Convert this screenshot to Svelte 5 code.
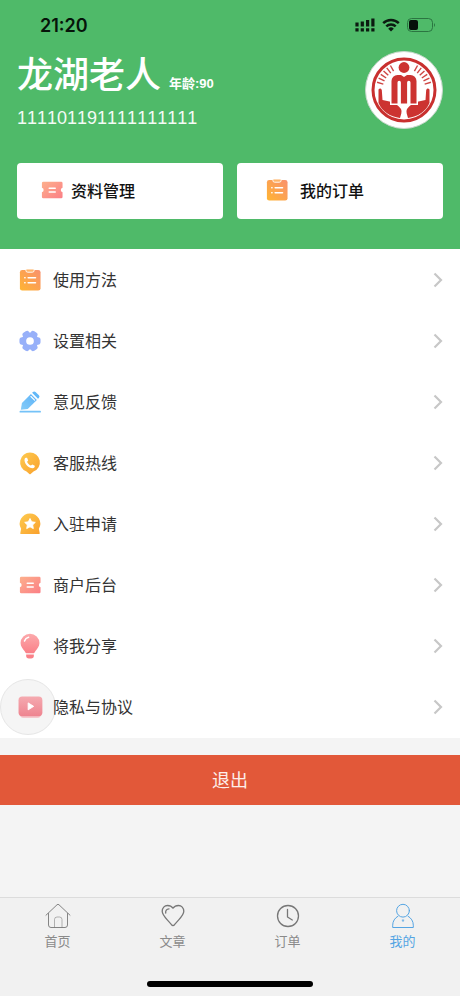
<script lang="ts">
  interface Item {
    icon: string;
    label: string;
  }

  const shortcuts: Item[] = [
    { icon: 'ticket', label: '资料管理' },
    { icon: 'clipboard', label: '我的订单' },
  ];

  const menu: Item[] = [
    { icon: 'clipboard', label: '使用方法' },
    { icon: 'gear', label: '设置相关' },
    { icon: 'pen', label: '意见反馈' },
    { icon: 'phone', label: '客服热线' },
    { icon: 'star', label: '入驻申请' },
    { icon: 'ticket', label: '商户后台' },
    { icon: 'bulb', label: '将我分享' },
    { icon: 'play', label: '隐私与协议' },
  ];

  const tabs: Item[] = [
    { icon: 'home', label: '首页' },
    { icon: 'heart', label: '文章' },
    { icon: 'clock', label: '订单' },
    { icon: 'user', label: '我的' },
  ];

  let activeTab = $state('我的');

  // rays on either side of the emblem's head
  const rays = [-74, -65, -56, -47, -38, -29, 29, 38, 47, 56, 65, 74];
</script>

{#snippet colorIcon(name: string)}
  <svg class="icon" viewBox="0 0 24 24" aria-hidden="true">
    {#if name === 'ticket'}
      <path fill="url(#g-coral)" d="M2.500 3h19.500a1.500 1.500 0 0 1 1.500 1.500v5a2.600 2.600 0 0 0 0 5v5a1.500 1.500 0 0 1-1.500 1.500H2.500A1.500 1.500 0 0 1 1 19.500v-5a2.600 2.600 0 0 0 0-5v-5A1.500 1.500 0 0 1 2.500 3z" />
      <path stroke="#fff" stroke-width="1.700" stroke-linecap="round" d="M9 10h6.500M9 14.200h6.500" />
    {:else if name === 'clipboard'}
      <rect x="1" y="1" width="22.500" height="22.500" rx="2.500" fill="url(#g-orange)" />
      <path fill="#ffb468" stroke="#fff" stroke-width="1" d="M7.500 0h9v1.500a2 2 0 0 1-2 2h-5a2 2 0 0 1-2-2z" />
      <path stroke="#fff" stroke-width="1.700" stroke-linecap="round" d="M6.300 9.500h.3M10 9.500h8M6.300 15h.3M10 15h8" />
    {:else if name === 'gear'}
      <circle cx="12" cy="12" r="9.300" fill="#97b0f9" />
      {#each [0, 60, 120] as angle}
        <rect x="0.500" y="8" width="23" height="8" rx="2.800" fill="#97b0f9" transform="rotate({angle} 12 12)" />
      {/each}
      <circle cx="12" cy="12" r="4.200" fill="#fff" />
    {:else if name === 'pen'}
      <path fill="url(#g-sky)" d="M2 20.500l1.200-7.500L13 3.300l6.500 6.400L9.500 19.500z" />
      <path fill="#62b8f8" d="M14.300 2l.9-.9a2 2 0 0 1 2.800 0l3.700 3.600a2 2 0 0 1 0 2.800l-1 1z" />
      <path stroke="#fff" stroke-width="1.200" stroke-linecap="round" d="M13 6l4 4" />
      <path stroke="#74c2f8" stroke-width="1.900" stroke-linecap="round" d="M1.500 22.500h21.500" />
    {:else if name === 'phone'}
      <path fill="url(#g-amber)" d="M12 .5a10.800 10.800 0 0 1 3.800 20.900L12.700 24a1.100 1.100 0 0 1-1.400 0l-3.100-2.600A10.800 10.800 0 0 1 12 .500z" />
      <path fill="#fff" d="M7.500 6.300l1.300.1 1.200 2.800-1.200 1.300c.8 1.900 2.200 3.400 4.200 4.300l1.500-1.100 2.700 1.200c.2 1.700-.8 2.700-2.400 2.700C10.500 17.500 6.300 13.300 6 9c0-1.500.5-2.400 1.500-2.700z" />
    {:else if name === 'star'}
      <path fill="url(#g-amber)" d="M12 .5a11.200 11.200 0 0 1 9.700 16.800l.8 4.200a1 1 0 0 1-1 1.500h-19a1 1 0 0 1-1-1.500l.8-4.200A11.200 11.200 0 0 1 12 .500z" />
      <path fill="#fff" stroke="#fff" stroke-width="1" stroke-linejoin="round" d="M12 6l1.800 3.600 4 .6-2.900 2.800.7 4L12 15.100 8.400 17l.7-4-2.900-2.800 4-.6z" />
    {:else if name === 'bulb'}
      <path fill="url(#g-pink)" d="M12 -1.500a10.300 10.300 0 0 1 10.300 10.300c0 4-2.600 6.200-4.500 9-.7 1.100-.9 2-1.800 2H8c-.9 0-1.100-.9-1.800-2C4.300 15 1.700 12.800 1.700 8.800A10.300 10.300 0 0 1 12-1.500z" />
      <path fill="#fa8088" d="M7.800 21.200h8.400v1.300a3 3 0 0 1-3 3h-2.400a3 3 0 0 1-3-3z" />
      <path fill="none" stroke="#fff" stroke-width="1.700" stroke-linecap="round" d="M6 6.500C6.700 4.500 8.300 3 10.500 2.500" />
    {:else if name === 'play'}
      <rect x="1" y="4" width="23" height="20" rx="4" fill="#f6c7cc" />
      <rect x="-0.500" y="0.500" width="26" height="21.500" rx="4" fill="url(#g-rose)" />
      <path fill="#fff" stroke="#fff" stroke-width="1" stroke-linejoin="round" d="M10 7.500l6 3.800-6 3.800z" />
    {/if}
  </svg>
{/snippet}

{#snippet tabIcon(name: string)}
  <svg class="tab-icon" viewBox="0 0 26 26" aria-hidden="true">
    {#if name === 'home'}
      <g stroke-width="0.900">
        <path d="M1 12.200L12 1.800q1-1 2 0l11 10.400M3.500 10.500V22a2.500 2.500 0 0 0 2.500 2.500h14a2.500 2.500 0 0 0 2.500-2.500V10.500" />
        <path d="M9.500 24.500v-8a2.500 2.500 0 0 1 2.500-2.500h2.500a2.500 2.500 0 0 1 2.500 2.500v8" opacity="0.600" />
      </g>
    {:else if name === 'heart'}
      <path d="M13 5.200C11.600 3.300 9.600 2.500 7.500 2.500 4.500 2.500 2.200 5 2.200 8.300c0 4.400 4.800 7.700 9.300 13.400q1.500 1.600 3 0c4.500-5.700 9.300-9 9.300-13.400 0-3.300-2.300-5.800-5.300-5.800-2.100 0-4.100.8-5.500 2.700z" />
      <path d="M5.700 10C5.400 7.700 6.500 6 9 5.800" />
    {:else if name === 'clock'}
      <circle cx="13" cy="13" r="10.500" />
      <path d="M12.500 6.500v7.500l4.800 3" />
    {:else if name === 'user'}
      <circle cx="13" cy="7.700" r="6.400" stroke-width="1" />
      <path stroke-width="1" d="M8 13.200c-3.200 1.800-5.300 5-5.300 9v2.300h20.600v-2.300c0-4-2.100-7.200-5.300-9" />
      <path d="M12.200 17.200h1.600M13 17v1.600" stroke-width="0.800" />
    {/if}
  </svg>
{/snippet}

<svg class="defs" aria-hidden="true">
  <defs>
    <linearGradient id="g-coral" x1="0" y1="0" x2="1" y2="1">
      <stop offset="0" stop-color="#fdb08c" />
      <stop offset="1" stop-color="#fb7f86" />
    </linearGradient>
    <linearGradient id="g-orange" x1="0" y1="1" x2="1" y2="0">
      <stop offset="0" stop-color="#ffb532" />
      <stop offset="1" stop-color="#f9906f" />
    </linearGradient>
    <linearGradient id="g-sky" x1="0" y1="1" x2="1" y2="0">
      <stop offset="0" stop-color="#86ccf8" />
      <stop offset="1" stop-color="#5bb2f8" />
    </linearGradient>
    <linearGradient id="g-amber" x1="0" y1="0" x2="1" y2="1">
      <stop offset="0" stop-color="#fdcb50" />
      <stop offset="1" stop-color="#faa02c" />
    </linearGradient>
    <linearGradient id="g-pink" x1="0" y1="0" x2="0" y2="1">
      <stop offset="0" stop-color="#fcaaac" />
      <stop offset="1" stop-color="#fa8088" />
    </linearGradient>
    <linearGradient id="g-rose" x1="0" y1="0" x2="0" y2="1">
      <stop offset="0" stop-color="#f5aab0" />
      <stop offset="1" stop-color="#ee8490" />
    </linearGradient>
  </defs>
</svg>

<div class="page">
  <header class="header">
    <div class="status-bar">
      <span class="time">21:20</span>
      <div class="status-icons">
        <svg width="20" height="14" viewBox="0 0 20 14" aria-hidden="true">
          <path stroke="#0b1a10" stroke-width="3.200" d="M2 4.500v4M7.300 3.500v5M12.600 2v6.500M17.900 .5v8M2 10.300v3.200M7.300 10.300v3.200M12.600 10.300v3.200M17.900 10.300v3.200" />
        </svg>
        <svg width="18" height="14" viewBox="0 0 18 14" aria-hidden="true">
          <g fill="none" stroke="#0b1a10" stroke-width="2.400">
            <path d="M1.200 5.200a11 11 0 0 1 15.600 0" />
            <path d="M4.300 8.400a6.600 6.600 0 0 1 9.400 0" />
          </g>
          <path fill="#0b1a10" d="M6.200 10.700a4 4 0 0 1 5.600 0L9 13.600z" />
        </svg>
        <svg width="30" height="14" viewBox="0 0 30 14" aria-hidden="true">
          <rect x="0.500" y="0.500" width="25" height="13" rx="4" fill="none" stroke="#2b7541" />
          <rect x="2" y="2" width="9" height="10" rx="2" fill="#06110a" />
          <path fill="#2b7541" d="M27 5q2 2 0 4z" />
        </svg>
      </div>
    </div>

    <div class="profile">
      <div class="who">
        <div class="name-line">
          <h1>龙湖老人</h1>
          <span class="age">年龄:90</span>
        </div>
        <div class="id-number">111101191111111111</div>
      </div>
      <svg class="avatar" viewBox="0 0 78 78" role="img" aria-label="头像">
        <circle cx="39" cy="39" r="38.500" fill="#fff" stroke="#c8d8cc" />
        <circle cx="39" cy="39" r="31" fill="none" stroke="#c9302f" stroke-width="3" />
        <g fill="#cc3331">
          <circle cx="39" cy="16.500" r="5.400" />
          <path d="M13.500 38.500q2-2 3.300.5L17.500 49l7 1.500c5 1 9 4 11.500 7.500q1 2 .3 4.500L35 67C25 65.500 17.500 61 13.500 52z" />
          <path d="M64.500 38.500q-2-2-3.300.5L60.500 49l-7 1.500c-5 1-9 4-11.500 7.500q-1 2-.3 4.500L43 67C53 65.500 60.500 61 64.500 52z" />
          <path stroke="#fff" stroke-width="3" paint-order="stroke" d="M26.500 52.500V30a6 6 0 0 1 6-6H36l3 2 3-2h3.500a6 6 0 0 1 6 6v22.500h-6V31.500a1.700 1.700 0 0 0-3.400 0v21h-6.200v-21a1.700 1.700 0 0 0-3.400 0v21z" />
        </g>
        <g stroke="#cf4644" stroke-width="1.400">
          {#each rays as angle}
            <path d="M39 11v6.500" transform="rotate({angle} 39 39)" />
          {/each}
        </g>
      </svg>
    </div>

    <div class="shortcuts">
      {#each shortcuts as item, i}
        <button type="button" class="shortcut" class:wide={i === 1}>
          {@render colorIcon(item.icon)}
          <span class="shortcut-label">{item.label}</span>
        </button>
      {/each}
    </div>
  </header>

  <ul class="menu">
    {#each menu as item}
      <li>
        <button type="button" class="menu-row">
          {#if item.icon === 'play'}
            <span class="touch"></span>
          {/if}
          {@render colorIcon(item.icon)}
          <span class="menu-label">{item.label}</span>
          <svg class="chevron" viewBox="0 0 10 16" aria-hidden="true">
            <path fill="none" stroke="#c7c7c7" stroke-width="2.200" d="M1.500 1.500L8 8l-6.500 6.500" />
          </svg>
        </button>
      </li>
    {/each}
  </ul>

  <button type="button" class="logout">退出</button>

  <footer class="footer">
    <nav class="tabs">
      {#each tabs as tab}
        <a
          href="#{tab.icon}"
          class="tab"
          class:active={activeTab === tab.label}
          onclick={() => (activeTab = tab.label)}
        >
          {@render tabIcon(tab.icon)}
          <span>{tab.label}</span>
        </a>
      {/each}
    </nav>
    <div class="home-indicator"></div>
  </footer>
</div>

<style>
  :global(body) {
    background: #f4f4f4;
  }

  .defs {
    position: absolute;
    width: 0;
    height: 0;
  }

  .page {
    display: flex;
    flex-direction: column;
    min-height: 100vh;
    font-family: 'Liberation Sans', 'Noto Sans CJK SC', sans-serif;
    color: #333;
  }

  button {
    margin: 0;
    border: 0;
    font: inherit;
    color: inherit;
    cursor: pointer;
  }

  .header {
    padding: 0 17px 30px;
    background: #4fba69;
  }

  .status-bar {
    display: flex;
    align-items: center;
    justify-content: space-between;
    height: 50px;
    padding: 0 6px 0 23px;
  }

  .time {
    font-family: Inter, sans-serif;
    font-size: 18px;
    font-weight: 600;
    color: #06140a;
  }

  .status-icons {
    display: flex;
    align-items: center;
    gap: 7px;
  }

  .profile {
    display: flex;
    justify-content: space-between;
    height: 113px;
  }

  .name-line {
    display: flex;
    align-items: baseline;
    gap: 8px;
    color: #fff;
  }

  h1 {
    margin: 0;
    font-size: 36px;
    font-weight: 500;
    line-height: 52px;
  }

  .age {
    font-size: 13px;
    font-weight: 700;
  }

  .id-number {
    font-size: 18px;
    line-height: 32px;
    font-kerning: none;
    color: #f4fbf5;
  }

  .avatar {
    width: 78px;
    height: 78px;
    margin-top: 1px;
  }

  .shortcuts {
    display: grid;
    grid-template-columns: 1fr 1fr;
    gap: 14px;
  }

  .shortcut {
    display: flex;
    align-items: center;
    gap: 8px;
    height: 56px;
    padding: 0 24px;
    border-radius: 4px;
    background: #fff;
    font-size: 16px;
    font-weight: 500;
    color: #111;
  }

  .shortcut.wide {
    gap: 12px;
    padding: 0 29px;
  }

  .shortcut .icon,
  .shortcut-label {
    margin-bottom: 2px;
  }

  .icon {
    flex: none;
    width: 22px;
    height: 22px;
    overflow: visible;
  }

  .menu {
    margin: 0;
    padding: 0 0 1px;
    list-style: none;
    background: #fff;
  }

  .menu-row {
    position: relative;
    display: flex;
    align-items: center;
    gap: 12px;
    width: 100%;
    height: 61px;
    padding: 0 17px 0 19px;
    background: transparent;
    font-size: 16px;
    text-align: left;
  }

  .menu-row .icon,
  .menu-label {
    position: relative;
  }

  .menu-label {
    flex: 1;
    padding-bottom: 2px;
  }

  .chevron {
    width: 10px;
    height: 16px;
  }

  /* floating assistive touch dot behind the last icon */
  .touch {
    position: absolute;
    top: 3px;
    left: 0;
    width: 54px;
    height: 54px;
    border: 1px solid #e6e6e6;
    border-radius: 50%;
    background: #f5f5f5;
  }

  .logout {
    height: 50px;
    margin: 17px 0;
    padding: 0 0 2px;
    background: #e25839;
    font-size: 18px;
    color: #fdeee9;
  }

  .footer {
    margin-top: auto;
    padding-bottom: 9px;
    border-top: 1px solid #dcdcdc;
    background: #f1f1f1;
  }

  .tabs {
    display: flex;
    height: 83px;
  }

  .tab {
    display: flex;
    flex: 1;
    flex-direction: column;
    align-items: center;
    gap: 1px;
    padding-top: 5px;
    font-size: 13px;
    line-height: 24px;
    color: #8a8a8a;
    text-decoration: none;
  }

  .tab.active {
    color: #55a5e3;
  }

  .tab-icon {
    width: 26px;
    height: 26px;
    fill: none;
    stroke: #777;
    stroke-width: 1.300;
    stroke-linecap: round;
    stroke-linejoin: round;
  }

  .tab.active .tab-icon {
    stroke: #55a5e3;
  }

  .home-indicator {
    width: 36%;
    height: 6px;
    margin: 0 auto;
    border-radius: 3px;
    background: #000;
  }
</style>
